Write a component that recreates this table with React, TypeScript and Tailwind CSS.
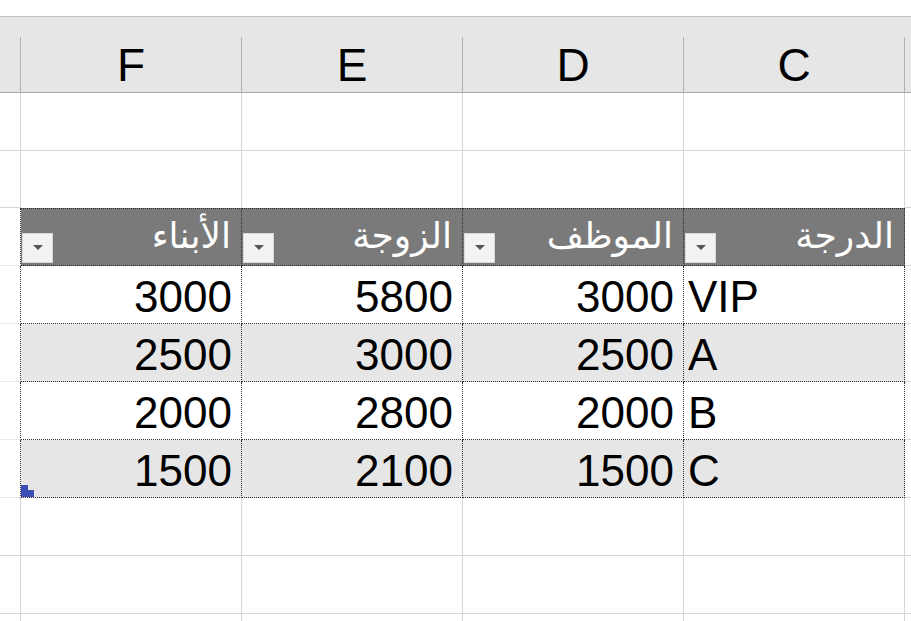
import React from "react";

const COLS = "grid grid-cols-[21px_221px_221px_221px_221px_1fr]";
const FONT = { fontFamily: '"Liberation Sans", "DejaVu Sans", Arial, sans-serif' };

type Row = { c: string; d: number; e: number; f: number };

const rows: Row[] = [
  { c: "VIP", d: 3000, e: 5800, f: 3000 },
  { c: "A", d: 2500, e: 3000, f: 2500 },
  { c: "B", d: 2000, e: 2800, f: 2000 },
  { c: "C", d: 1500, e: 2100, f: 1500 },
];

function Dropdown() {
  return (
    <div className="ml-[1px] mb-[2px] w-[31px] h-[30px] shrink-0 bg-[#f3f3f3] border border-[#d8d8d8] flex items-center justify-center">
      <svg width="10" height="6" viewBox="0 0 10 6">
        <path d="M0 0 L10 0 L5 5 Z" fill="#555" />
      </svg>
    </div>
  );
}

function EmptyRow({ h }: { h: string }) {
  return (
    <div className={`${COLS} ${h}`}>
      {[0, 1, 2, 3, 4, 5].map((i) => (
        <div
          key={i}
          className={`border-b border-[#d6d6d6] ${i < 5 ? "border-r" : ""}`}
        />
      ))}
    </div>
  );
}

export default function App() {
  const letters = ["F", "E", "D", "C"];
  const heads = ["الأبناء", "الزوجة", "الموظف", "الدرجة"];

  return (
    <div className="w-[911px] h-[621px] overflow-hidden bg-white" style={FONT}>
      {/* strip above the column headings */}
      <div className="h-[17px] border-b border-[#c4c4c4]" />

      {/* column headings */}
      <div className={`${COLS} h-[76px] bg-[#e6e6e6] border-b border-[#a8a8a8]`}>
        <div className="flex justify-end">
          <div className="w-px mt-[20px] bg-[#b2b2b2]" />
        </div>
        {letters.map((l) => (
          <div key={l} className="flex">
            <div className="flex-1 text-center text-[46px] leading-none pt-[25px] text-black">
              {l}
            </div>
            <div className="w-px mt-[20px] bg-[#b2b2b2]" />
          </div>
        ))}
        <div />
      </div>

      {/* rows 1, 2 */}
      <EmptyRow h="h-[58px]" />
      <div className={`${COLS} h-[57px]`}>
        <div className="border-r border-b border-[#d6d6d6]" />
        <div className="border-r border-[#d6d6d6]" />
        <div className="border-r border-[#d6d6d6]" />
        <div className="border-r border-[#d6d6d6]" />
        <div className="border-r border-[#d6d6d6]" />
        <div className="border-b border-[#d6d6d6]" />
      </div>

      {/* table heading */}
      <div className={`${COLS} h-[58px]`}>
        <div className="border-r border-dotted border-r-[#333] border-b border-b-[#d6d6d6]" />
        {heads.map((t) => (
          <div
            key={t}
            className="flex items-end justify-between bg-[#7a7a7a] border-t border-b border-r border-dotted border-[#2e2e2e]"
          >
            <Dropdown />
            <div
              dir="rtl"
              className="pr-[10px] pb-[11px] text-white text-[36px] leading-none"
            >
              {t}
            </div>
          </div>
        ))}
        <div className="border-b border-[#d6d6d6]" />
      </div>

      {/* data rows */}
      {rows.map((r, i) => {
        const bg = i % 2 === 1 ? "bg-[#e6e6e6]" : "bg-white";
        const cell = `flex items-end pb-[4px] text-[44px] leading-none text-black border-r border-b border-dotted border-[#2e2e2e] ${bg}`;
        return (
          <div key={r.c} className={`${COLS} h-[58px]`}>
            <div className="border-r border-dotted border-r-[#333] border-b border-b-[#d6d6d6]" />
            <div className={`${cell} justify-end pr-[9px] relative`}>
              {i === 3 && (
                <svg
                  className="absolute left-0 bottom-0"
                  width="13"
                  height="12"
                  viewBox="0 0 13 12"
                >
                  <path d="M0 0 H7 V5 H13 V12 H0 Z" fill="#3d4eb4" />
                </svg>
              )}
              {r.f}
            </div>
            <div className={`${cell} justify-end pr-[9px]`}>{r.e}</div>
            <div className={`${cell} justify-end pr-[9px]`}>{r.d}</div>
            <div className={`${cell} justify-start pl-[4px]`}>{r.c}</div>
            <div className="border-b border-[#d6d6d6]" />
          </div>
        );
      })}

      <EmptyRow h="h-[58px]" />
      <EmptyRow h="h-[58px]" />
      <EmptyRow h="h-[58px]" />
    </div>
  );
}
